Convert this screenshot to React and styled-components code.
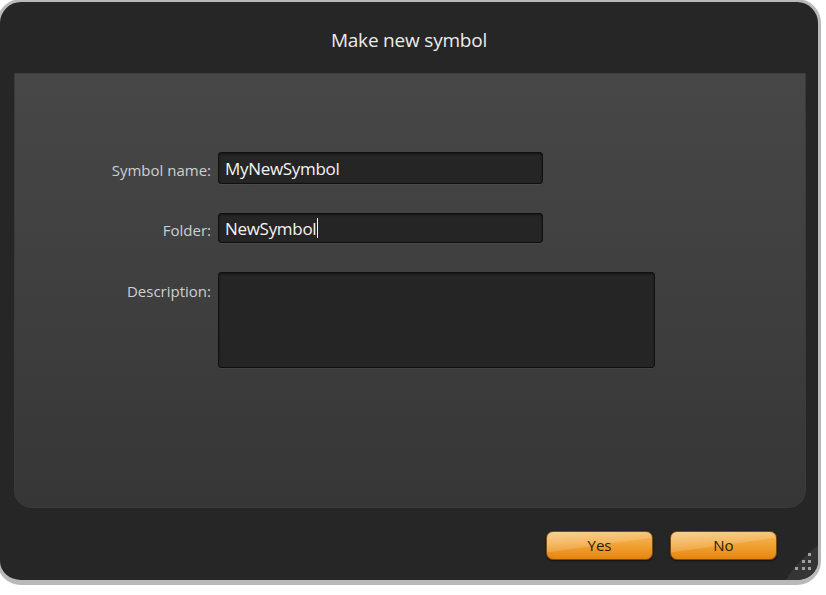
import styled, { createGlobalStyle } from 'styled-components';

const GlobalStyle = createGlobalStyle`
  html, body {
    margin: 0;
    padding: 0;
    background: #ffffff;
    overflow: hidden;
  }
  body {
    font-family: "Open Sans", "Noto Sans", sans-serif;
  }
`;

export default function App() {
  return (
    <>
      <GlobalStyle />
      <Frame>
        <Header>
          <Title>Make new symbol</Title>
        </Header>
        <Panel>
          <Form>
            <Label>Symbol name:</Label>
            <Field $width={325} $height={32}>MyNewSymbol</Field>
            <Label>Folder:</Label>
            <Field $width={325} $height={30}>
              NewSymbol
              <Caret />
            </Field>
            <Label $top>Description:</Label>
            <Field $width={437} $height={96} />
          </Form>
        </Panel>
        <Footer>
          <Button>Yes</Button>
          <Button>No</Button>
        </Footer>
        <Grip width="40" height="40" viewBox="0 0 40 40">
          <path d="M40 6 C 30 12, 14 28, 8 40 L 40 40 Z" fill="#353535" />
          <rect x="30" y="13" width="3" height="3" fill="#a0a0a0" />
          <rect x="24" y="20" width="3" height="3" fill="#a0a0a0" />
          <rect x="30" y="20" width="3" height="3" fill="#a0a0a0" />
          <rect x="17" y="27" width="3" height="3" fill="#a0a0a0" />
          <rect x="24" y="27" width="3" height="3" fill="#a0a0a0" />
          <rect x="30" y="27" width="3" height="3" fill="#a0a0a0" />
        </Grip>
      </Frame>
    </>
  );
}

const Frame = styled.div`
  position: relative;
  box-sizing: border-box;
  width: 824px;
  height: 586px;
  margin: -1px 0 0 -3px;
  border: 3px solid #b9b9b9;
  border-bottom-width: 5px;
  border-radius: 24px;
  background: #262626;
  display: flex;
  flex-direction: column;
  overflow: hidden;
`;

const Header = styled.div`
  height: 71px;
  flex: none;
  display: flex;
  align-items: center;
  justify-content: center;
`;

const Title = styled.div`
  color: #ececec;
  font-size: 19px;
  margin-top: 4px;
  letter-spacing: -0.2px;
`;

const Panel = styled.div`
  height: 435px;
  flex: none;
  margin: 0 12px 0 14px;
  box-sizing: border-box;
  border: 1px solid #3a3a3a;
  border-top-color: #3d3d3d;
  border-radius: 0 0 18px 18px;
  background: linear-gradient(to bottom, #474747 0%, #3f3f3f 50%, #363636 100%);
`;

const Form = styled.div`
  display: grid;
  grid-template-columns: 196px auto;
  column-gap: 7px;
  row-gap: 29px;
  align-items: center;
  justify-content: start;
  padding-top: 78px;
`;

const Label = styled.div`
  color: #cfcfcf;
  font-size: 15px;
  text-align: right;
  align-self: ${(p) => (p.$top ? 'start' : 'center')};
  margin-top: ${(p) => (p.$top ? '9px' : '4px')};
`;

const Field = styled.div`
  box-sizing: border-box;
  width: ${(p) => p.$width}px;
  height: ${(p) => p.$height}px;
  background: #252525;
  border: 1px solid #101010;
  border-radius: 3px;
  box-shadow: inset 0 1px 2px rgba(0, 0, 0, 0.5), 0 1px 0 rgba(255, 255, 255, 0.04);
  color: #f4f4f4;
  font-size: 17px;
  padding: 0 6px;
  display: flex;
  align-items: center;
  letter-spacing: -0.3px;
`;

const Caret = styled.span`
  display: inline-block;
  width: 1px;
  height: 20px;
  background: #f4f4f4;
  margin-left: 1px;
`;

const Footer = styled.div`
  flex: 1;
  display: flex;
  align-items: center;
  justify-content: flex-end;
  gap: 17px;
  padding: 2px 41px 0 0;
`;

const Button = styled.div`
  box-sizing: border-box;
  width: 107px;
  height: 29px;
  border: 1px solid #7c4a0e;
  border-radius: 7px;
  background:
    linear-gradient(172deg, rgba(255, 255, 255, 0.35) 0%, rgba(255, 255, 255, 0.15) 48%, rgba(255, 255, 255, 0) 50%),
    linear-gradient(to bottom, #f7b85a 0%, #f0a234 50%, #e6850e 100%);
  box-shadow: 0 1px 2px rgba(0, 0, 0, 0.6);
  color: #2a1c08;
  font-size: 15px;
  display: flex;
  align-items: center;
  justify-content: center;
`;

const Grip = styled.svg`
  position: absolute;
  right: 0;
  bottom: 0;
`;
